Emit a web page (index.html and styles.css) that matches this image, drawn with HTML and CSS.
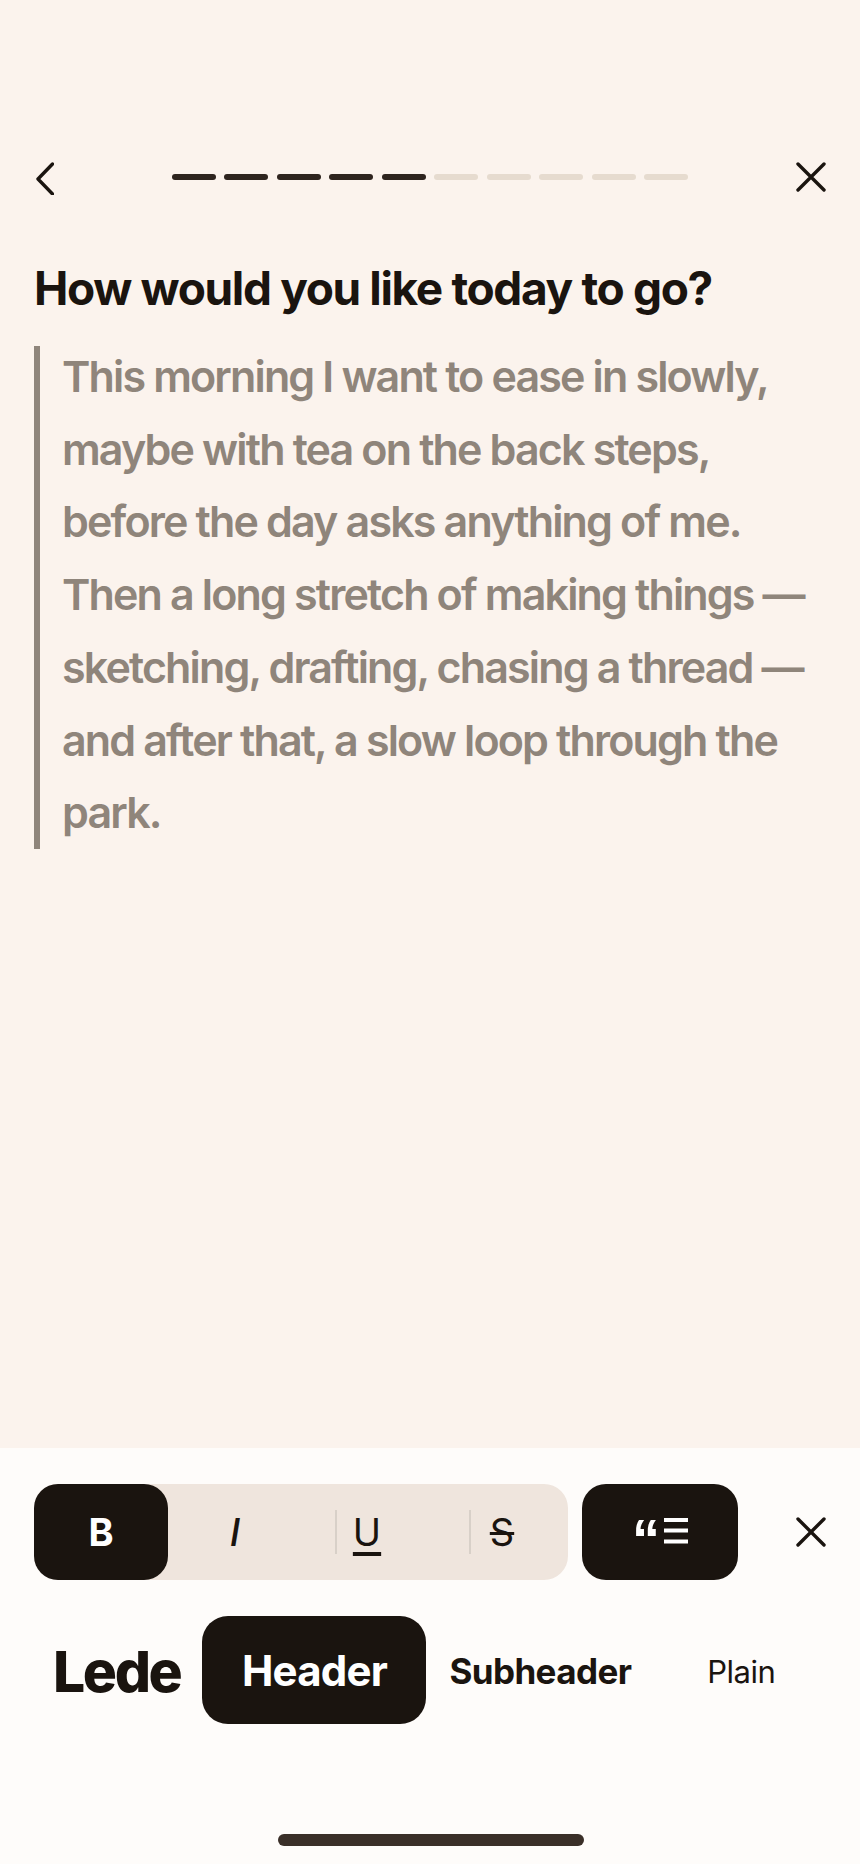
FILE: index.html
```html
<!DOCTYPE html>
<html lang="en">
<head>
    <meta charset="UTF-8">
    <meta name="viewport" content="width=device-width, initial-scale=1.0">
    <title>Today</title>
    <link rel="stylesheet" href="styles.css">
</head>
<body>
    <div class="screen">
        <div class="topbar">
            <button class="icon-button back">
                <svg width="18" height="34" viewBox="0 0 18 34"><path d="M16.5 3 L2 18 L16.5 33" /></svg>
            </button>
            <div class="progress">
                <span class="seg done"></span>
                <span class="seg done"></span>
                <span class="seg done"></span>
                <span class="seg done"></span>
                <span class="seg done"></span>
                <span class="seg"></span>
                <span class="seg"></span>
                <span class="seg"></span>
                <span class="seg"></span>
                <span class="seg"></span>
            </div>
            <button class="icon-button close top-close">
                <svg width="30" height="30" viewBox="0 0 30 30"><path d="M2 2 L28 28 M28 2 L2 28" /></svg>
            </button>
        </div>

        <div class="content">
            <h1 class="question">How would you like today to go?</h1>
            <blockquote class="answer"><p>This morning I want to ease in slowly, maybe with tea on the back steps, before the day asks anything of me. Then a long stretch of making things — sketching, drafting, chasing a thread — and after that, a slow loop through the park.</p></blockquote>
        </div>

        <div class="panel">
            <div class="format-row">
                <div class="format-group">
                    <button class="format bold active">B</button>
                    <button class="format italic">I</button>
                    <span class="divider"></span>
                    <button class="format underline">U</button>
                    <span class="divider"></span>
                    <button class="format strike">S</button>
                </div>
                <button class="quote-button">
                    <span class="quote-mark">“</span>
                    <svg width="24" height="26" viewBox="0 0 24 26"><path d="M0 2 H24 M0 12.5 H24 M0 23.5 H24" /></svg>
                </button>
                <button class="icon-button close panel-close">
                    <svg width="30" height="30" viewBox="0 0 30 30"><path d="M2 2 L28 28 M28 2 L2 28" /></svg>
                </button>
            </div>
            <div class="style-row">
                <button class="style lede">Lede</button>
                <button class="style header active">Header</button>
                <button class="style subheader">Subheader</button>
                <button class="style plain">Plain</button>
            </div>
            <div class="home-bar"></div>
        </div>
    </div>
</body>
</html>
```

FILE: styles.css
```css
* {
    box-sizing: border-box;
}
body {
    margin: 0;
    font-family: Inter, "Liberation Sans", sans-serif;
    color: #1a140f;
}
button {
    font-family: inherit;
    color: inherit;
    background: none;
    border: none;
    padding: 0;
}
.screen {
    width: 860px;
    height: 1864px;
    display: flex;
    flex-direction: column;
    background: #fbf3ed;
    overflow: hidden;
}
.topbar {
    display: flex;
    align-items: center;
    height: 34px;
    margin-top: 161px;
    padding: 0 34px 0 36px;
}
.icon-button {
    display: flex;
    align-items: center;
    justify-content: center;
}
.icon-button svg {
    fill: none;
    stroke: #1a140f;
    stroke-width: 3.4;
    stroke-linecap: round;
    stroke-linejoin: round;
}
.top-close {
    margin-top: -2px;
}
.progress {
    display: flex;
    gap: 8.4px;
    width: 516px;
    margin: -2px 108px 0 118px;
}
.seg {
    flex: 1;
    height: 6px;
    border-radius: 3px;
    background: #e6dbcf;
}
.seg.done {
    background: #2e241e;
}
.content {
    flex: 1;
    padding: 66px 34px 0;
}
.question {
    margin: 0;
    font-size: 46px;
    line-height: 54px;
    font-weight: 700;
    letter-spacing: -1.35px;
}
.answer {
    display: flow-root;
    margin: 31px 0 0;
    padding: 0 0 0 22px;
    border-left: 6px solid #8f857b;
    font-size: 43px;
    line-height: 72.7px;
    font-weight: 600;
    letter-spacing: -1.85px;
    color: #8f857b;
}
.answer p {
    margin: -6px 0 0;
}
.panel {
    height: 416px;
    display: flex;
    flex-direction: column;
    background: #fefcfa;
}
.format-row {
    display: flex;
    align-items: center;
    height: 96px;
    margin-top: 36px;
    padding: 0 34px;
}
.format-group {
    display: flex;
    align-items: center;
    width: 534px;
    height: 96px;
    border-radius: 24px;
    background: #efe5dd;
}
.format {
    height: 96px;
    font-size: 38px;
}
.format.bold {
    flex: 0 0 134px;
    font-weight: 700;
}
.format.active {
    border-radius: 24px;
    color: #fff;
    background: #1a140f;
}
.format.italic {
    flex: 0 0 167px;
    padding-right: 33px;
    font-style: italic;
    font-weight: 500;
}
.format.underline {
    flex: 0 0 132px;
    padding-right: 72px;
    text-decoration: underline;
    text-decoration-thickness: 4px;
    text-underline-offset: 6px;
}
.format.strike {
    flex: 0 0 97px;
    padding-right: 35px;
    text-decoration: line-through;
    text-decoration-thickness: 3px;
}
.divider {
    flex: 0 0 2px;
    height: 44px;
    background: #d8d0c8;
}
.quote-button {
    display: flex;
    align-items: flex-start;
    justify-content: center;
    gap: 4px;
    width: 156px;
    height: 96px;
    padding-top: 34px;
    margin-left: 14px;
    border-radius: 24px;
    color: #fff;
    background: #1a140f;
}
.quote-button svg {
    fill: none;
    stroke: #fff;
    stroke-width: 4;
    stroke-linecap: butt;
}
.quote-mark {
    margin-top: -4px;
    font-family: "Liberation Sans", sans-serif;
    font-size: 56px;
    line-height: 50px;
    font-weight: 700;
    height: 26px;
}
.panel-close {
    margin-left: auto;
}
.style-row {
    display: flex;
    align-items: center;
    height: 108px;
    margin-top: 36px;
    padding-left: 53px;
}
.style {
    height: 108px;
    padding-top: 2px;
    letter-spacing: -0.8px;
}
.lede {
    font-size: 57px;
    font-weight: 800;
    letter-spacing: -2.4px;
}
.header {
    width: 224px;
    margin-left: 22px;
    padding-top: 0;
    border-radius: 26px;
    font-size: 42px;
    font-weight: 700;
    color: #fff;
    background: #1a140f;
}
.subheader {
    margin-left: 23px;
    font-size: 35px;
    font-weight: 700;
    letter-spacing: -0.6px;
}
.plain {
    margin-left: 76px;
    font-size: 31px;
    font-weight: 400;
    letter-spacing: -0.5px;
}
.home-bar {
    width: 306px;
    height: 12px;
    margin: auto 276px 18px 278px;
    border-radius: 6px;
    background: #3a2f28;
}
```
